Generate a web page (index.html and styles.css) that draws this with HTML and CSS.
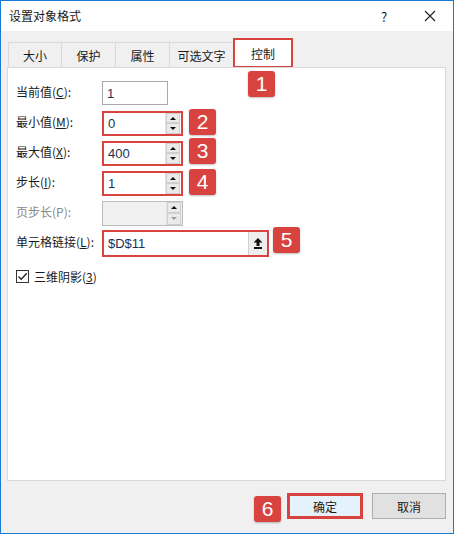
FILE: index.html
```html
<!DOCTYPE html>
<html lang="zh-CN">
<head>
  <meta charset="UTF-8" />
  <title>设置对象格式</title>
  <link rel="stylesheet" href="styles.css">
</head>
<body>
  <div class="window">
    <div class="titlebar">
      <span class="title">设置对象格式</span>
      <span class="help">?</span>
      <span class="close">
        <svg width="12" height="12" viewBox="0 0 12 12"><path d="M1 1L11 11M11 1L1 11" stroke="#222" stroke-width="1.1" fill="none"/></svg>
      </span>
    </div>

    <div class="content">
      <div class="tabs">
        <div class="tab first">大小</div>
        <div class="tab">保护</div>
        <div class="tab">属性</div>
        <div class="tab wide">可选文字</div>
        <div class="tab active">控制</div>
      </div>

      <div class="panel">
        <div class="form">
          <label>当前值(<u>C</u>):</label>
          <div class="field short"><span class="value">1</span></div>

          <label>最小值(<u>M</u>):</label>
          <div class="field spin marked"><span class="value">0</span><div class="spinner"><span class="up"></span><span class="down"></span></div></div>

          <label>最大值(<u>X</u>):</label>
          <div class="field spin marked"><span class="value">400</span><div class="spinner"><span class="up"></span><span class="down"></span></div></div>

          <label>步长(<u>I</u>):</label>
          <div class="field spin marked"><span class="value">1</span><div class="spinner"><span class="up"></span><span class="down"></span></div></div>

          <label class="disabled">页步长(P):</label>
          <div class="field spin disabled"><span class="value"></span><div class="spinner"><span class="up"></span><span class="down"></span></div></div>

          <label>单元格链接(<u>L</u>):</label>
          <div class="field link marked"><span class="value">$D$11</span>
            <div class="refbtn">
              <svg width="10" height="11" viewBox="0 0 10 11"><path d="M5 0L9.5 4.5H6.5V8H3.5V4.5H0.5Z" fill="#111"/><rect x="1" y="9" width="8" height="2" fill="#111"/></svg>
            </div>
          </div>
        </div>

        <div class="check">
          <span class="box">
            <svg width="11" height="11" viewBox="0 0 11 11"><path d="M1.5 5.5L4.2 8.3L9.8 2.2" stroke="#222" stroke-width="1.3" fill="none"/></svg>
          </span>
          <span>三维阴影(<u>3</u>)</span>
        </div>
      </div>

      <div class="footer">
        <button class="btn primary">确定</button>
        <button class="btn">取消</button>
      </div>
    </div>

    <span class="badge b1">1</span>
    <span class="badge b2">2</span>
    <span class="badge b3">3</span>
    <span class="badge b4">4</span>
    <span class="badge b5">5</span>
    <span class="badge b6">6</span>
  </div>
</body>
</html>
```

FILE: styles.css
```css
body {
  margin: 0;
  font-family: "Noto Sans CJK SC", "Liberation Sans", sans-serif;
  font-size: 12px;
  color: #1a1a1a;
}
.window {
  position: relative;
  width: 454px;
  height: 534px;
  box-sizing: border-box;
  border: 1px solid #1a7ad0;
  background: #f0f0f0;
  display: flex;
  flex-direction: column;
}
.titlebar {
  height: 30px;
  background: white;
  display: flex;
  align-items: center;
  padding-left: 8px;
}
.title {
  flex: 1;
  font-size: 12px;
  margin-top: -2px;
}
.help {
  width: 46px;
  text-align: center;
  font-size: 13px;
}
.close {
  width: 46px;
  height: 30px;
  display: flex;
  align-items: center;
  justify-content: center;
}
.content {
  flex: 1;
  display: flex;
  flex-direction: column;
  padding: 7px 7px 0 6px;
}
.tabs {
  display: flex;
  align-items: flex-end;
  height: 29px;
  padding-left: 1px;
}
.tab {
  height: 25px;
  width: 54px;
  box-sizing: border-box;
  border: 1px solid #d9d9d9;
  border-bottom: none;
  border-right: none;
  display: flex;
  align-items: center;
  justify-content: center;
  font-size: 12px;
}
.tab.first {
  width: 53px;
}
.tab.wide {
  width: 64px;
}
.tab.active {
  height: 30px;
  width: 60px;
  background: white;
  border: 2px solid #d8433f;
  margin-bottom: -1px;
}
.panel {
  height: 414px;
  box-sizing: border-box;
  background: white;
  border: 1px solid #d9d9d9;
  padding: 12px 8px 0 8px;
}
.form {
  display: grid;
  grid-template-columns: 86px auto;
  grid-auto-rows: 26px;
  row-gap: 4px;
  align-items: center;
}
.form label {
  padding-bottom: 4px;
  white-space: nowrap;
}
.disabled {
  color: #8a8a8a;
}
u {
  text-decoration: underline;
  text-underline-offset: 1px;
}
.field {
  height: 25px;
  box-sizing: border-box;
  border: 1px solid #a9a9a9;
  background: white;
  display: flex;
  align-items: center;
  justify-self: start;
}
.field.short {
  width: 66px;
  height: 24px;
}
.field.spin {
  width: 81px;
}
.field.link {
  width: 167px;
  height: 27px;
}
.field.marked {
  border: 2px solid #d8433f;
}
.field.disabled {
  background: #f0f0f0;
  border-color: #bcbcbc;
}
.value {
  flex: 1;
  padding-left: 4px;
  font-size: 13px;
  color: #1d2f55;
  font-family: "Liberation Sans", sans-serif;
}
.spinner {
  width: 14px;
  height: 100%;
  display: flex;
  flex-direction: column;
  border-left: 1px solid #e2e2e2;
  margin-right: 1px;
}
.spinner span {
  flex: 1;
  background: #eaeaea;
  position: relative;
  border: 1px solid #d0d0d0;
}
.spinner .up::after,
.spinner .down::after {
  content: "";
  position: absolute;
  left: 3px;
  border-left: 3px solid transparent;
  border-right: 3px solid transparent;
}
.spinner .up::after {
  top: 3px;
  border-bottom: 3px solid #111;
}
.spinner .down::after {
  top: 3px;
  border-top: 3px solid #111;
}
.field.disabled .spinner .down::after {
  border-top-color: #9a9a9a;
}
.refbtn {
  width: 18px;
  height: 100%;
  background: #eeeeee;
  border-left: 1px solid #d0d0d0;
  display: flex;
  align-items: center;
  justify-content: center;
}
.check {
  display: flex;
  align-items: center;
  gap: 5px;
  margin-top: 12px;
}
.check .box {
  width: 13px;
  height: 13px;
  box-sizing: border-box;
  border: 1px solid #333;
  display: flex;
  align-items: center;
  justify-content: center;
}
.footer {
  display: flex;
  justify-content: flex-end;
  gap: 9px;
  padding-top: 12px;
}
.btn {
  width: 74px;
  height: 26px;
  font-family: "Noto Sans CJK SC", sans-serif;
  font-size: 12px;
  color: #1a1a1a;
  background: #e1e1e1;
  border: 1px solid #adadad;
  padding: 0;
}
.btn.primary {
  width: 76px;
  background: #e5f1fb;
  border: 3px solid #d8433f;
}
.badge {
  position: absolute;
  width: 27px;
  height: 26px;
  background: #d8433f;
  border-radius: 3px;
  color: white;
  font-family: "Liberation Sans", sans-serif;
  font-size: 21px;
  display: flex;
  align-items: center;
  justify-content: center;
  box-shadow: 0 1px 2px rgba(0,0,0,0.25);
}
.b1 { left: 247px; top: 70px; }
.b2 { left: 188px; top: 108px; }
.b3 { left: 188px; top: 137px; }
.b4 { left: 188px; top: 168px; }
.b5 { left: 272px; top: 226px; }
.b6 { left: 253px; top: 495px; }
```
